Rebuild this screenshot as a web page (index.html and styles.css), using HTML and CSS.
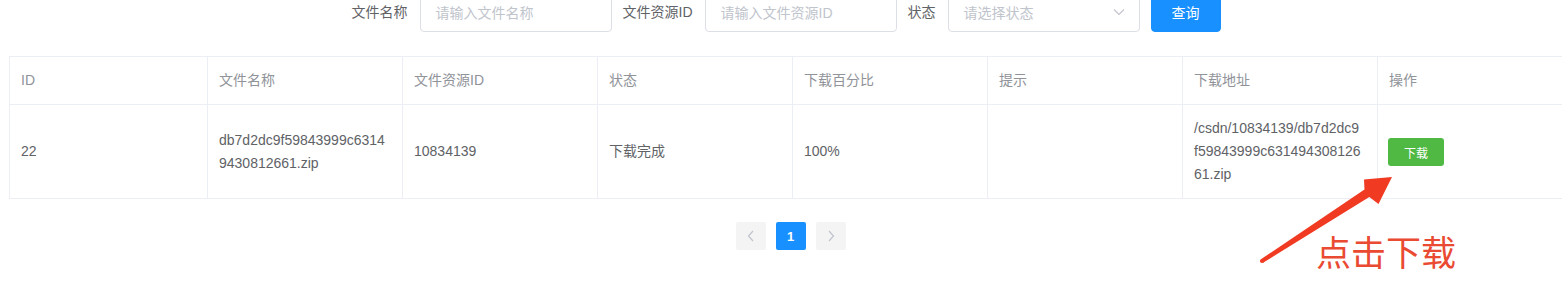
FILE: index.html
```html
<!DOCTYPE html>
<html lang="zh-CN">
<head>
<meta charset="utf-8">
<title>下载列表</title>
<link rel="stylesheet" href="styles.css">
</head>
<body>
<div class="page">
  <form class="search">
    <div class="form-item">
      <label class="label">文件名称</label>
      <div class="input"><span class="placeholder">请输入文件名称</span></div>
    </div>
    <div class="form-item">
      <label class="label">文件资源ID</label>
      <div class="input"><span class="placeholder">请输入文件资源ID</span></div>
    </div>
    <div class="form-item">
      <label class="label">状态</label>
      <div class="input select">
        <span class="placeholder">请选择状态</span>
        <svg class="chevron" width="12" height="8" viewBox="0 0 12 8"><path d="M1 1.5 L6 6.5 L11 1.5" fill="none" stroke="#c0c4cc" stroke-width="1.1"/></svg>
      </div>
    </div>
    <div class="form-item">
      <button type="button" class="btn-primary">查询</button>
    </div>
  </form>

  <table class="grid">
    <colgroup>
      <col class="c-first"><col class="c"><col class="c"><col class="c"><col class="c"><col class="c"><col class="c"><col class="c">
    </colgroup>
    <thead>
      <tr>
        <th>ID</th><th>文件名称</th><th>文件资源ID</th><th>状态</th><th>下载百分比</th><th>提示</th><th>下载地址</th><th>操作</th>
      </tr>
    </thead>
    <tbody>
      <tr>
        <td>22</td>
        <td><div class="cell">db7d2dc9f59843999c63149430812661.zip</div></td>
        <td>10834139</td>
        <td>下载完成</td>
        <td>100%</td>
        <td></td>
        <td><div class="cell">/csdn/10834139/db7d2dc9f59843999c63149430812661.zip</div></td>
        <td><button type="button" class="btn-success">下载</button></td>
      </tr>
    </tbody>
  </table>

  <div class="pager">
    <button type="button" class="pg pg-nav"><svg width="10" height="12" viewBox="0 0 10 12"><path d="M7 1 L2.5 6 L7 11" fill="none" stroke="#c0c4cc" stroke-width="1.2"/></svg></button>
    <button type="button" class="pg pg-active">1</button>
    <button type="button" class="pg pg-nav"><svg width="10" height="12" viewBox="0 0 10 12"><path d="M3 1 L7.5 6 L3 11" fill="none" stroke="#c0c4cc" stroke-width="1.2"/></svg></button>
  </div>
</div>

<div class="note">
  <svg class="arrow" width="160" height="110" viewBox="0 0 160 110">
    <polygon points="10.9,99.3 114.5,29.5 114,19.5 142,17 128.5,44 119.3,37 13.1,102.7" fill="#f03a22"/>
    <circle cx="12" cy="101" r="2.1" fill="#f03a22"/>
  </svg>
  <span class="note-text">点击下载</span>
</div>
</body>
</html>
```

FILE: styles.css
```css
html, body {
  margin: 0;
  padding: 0;
  overflow: hidden;
  background: #ffffff;
}

body {
  font-family: "Liberation Sans", "Noto Sans CJK SC", sans-serif;
  font-size: 14px;
  color: #606266;
  position: relative;
  width: 1562px;
  height: 294px;
}

.page {
  width: 1563px;
  margin-left: 9px;
}

.search {
  display: flex;
  justify-content: center;
  margin: -8px 0 0 0;
  padding-left: 2px;
  height: 40px;
}

.form-item {
  display: flex;
  align-items: center;
  margin-right: 11px;
}

.label {
  padding-right: 12px;
  line-height: 40px;
  color: #606266;
  font-size: 14px;
}

.input {
  box-sizing: border-box;
  width: 192px;
  height: 40px;
  border: 1px solid #dcdfe6;
  border-radius: 4px;
  padding: 0 15px;
  display: flex;
  align-items: center;
  justify-content: space-between;
}

.placeholder {
  color: #c0c4cc;
  font-size: 14px;
}

.chevron {
  display: block;
  margin-right: -1px;
}

.btn-primary {
  box-sizing: border-box;
  width: 70px;
  height: 40px;
  border: 1px solid #1890ff;
  border-radius: 4px;
  background: #1890ff;
  color: #ffffff;
  font-family: inherit;
  font-size: 14px;
  padding: 0;
  margin-top: 0;
}

.grid {
  margin-top: 24px;
  border-collapse: collapse;
  table-layout: fixed;
  width: 1563px;
  border-top: 1px solid #ebeef5;
  border-left: 1px solid #ebeef5;
}

.c-first { width: 198px; }
.c { width: 195px; }

.grid th,
.grid td {
  border-right: 1px solid #ebeef5;
  border-bottom: 1px solid #ebeef5;
  padding: 12px 15px 12px 11px;
  line-height: 23px;
  text-align: left;
  vertical-align: middle;
  font-size: 14px;
}

.grid th {
  color: #909399;
  font-weight: normal;
}

.grid td {
  color: #606266;
}

.cell {
  word-break: break-all;
}

.btn-success {
  box-sizing: border-box;
  width: 56px;
  height: 28px;
  border: none;
  border-radius: 3px;
  background: #4fb944;
  color: #ffffff;
  font-family: inherit;
  font-size: 12px;
  padding: 0;
  display: block;
  margin-top: 1px;
  margin-left: -1px;
}

.pager {
  display: flex;
  justify-content: center;
  gap: 10px;
  margin-top: 23px;
}

.pg {
  box-sizing: border-box;
  width: 30px;
  height: 28px;
  border: none;
  border-radius: 2px;
  padding: 0;
  display: flex;
  align-items: center;
  justify-content: center;
  font-family: inherit;
  font-size: 13px;
  font-weight: bold;
}

.pg-nav {
  background: #f4f4f5;
}

.pg-active {
  background: #1890ff;
  color: #ffffff;
}

.note {
  position: absolute;
  left: 1250px;
  top: 160px;
  width: 300px;
  height: 134px;
}

.arrow {
  position: absolute;
  left: 0;
  top: 0;
}

.note-text {
  position: absolute;
  left: 66px;
  top: 67px;
  font-family: "Noto Sans CJK SC", sans-serif;
  font-size: 35px;
  line-height: 48px;
  color: #ea4a32;
  letter-spacing: 0px;
}
```
